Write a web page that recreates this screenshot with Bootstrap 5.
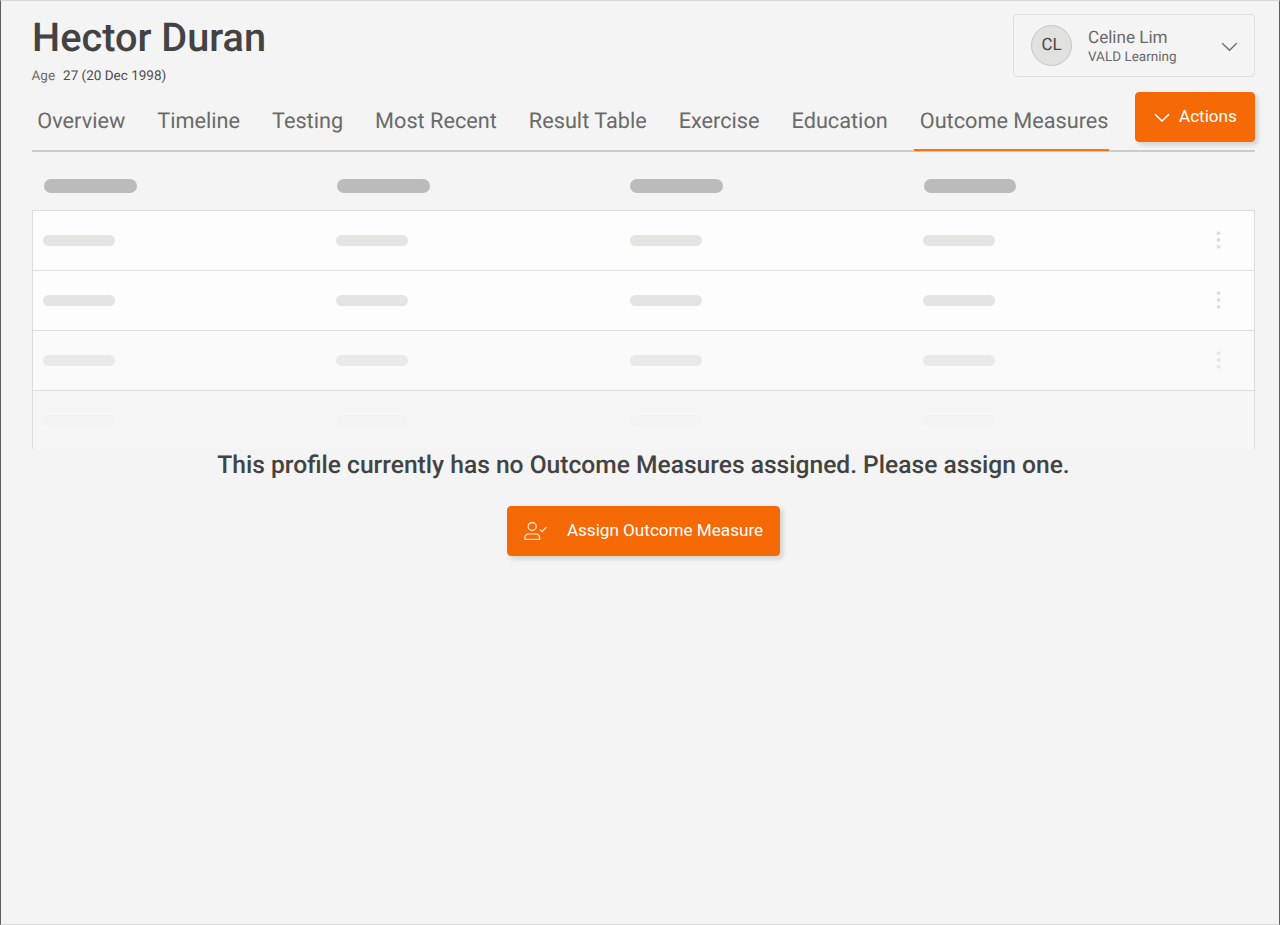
<!DOCTYPE html>
<html lang="en">
<head>
<meta charset="utf-8">
<meta name="viewport" content="width=device-width, initial-scale=1">
<title>Hector Duran</title>
<link href="https://cdn.jsdelivr.net/npm/bootstrap@5.3.0/dist/css/bootstrap.min.css" rel="stylesheet">
<style>
body{font-family:Roboto,"Liberation Sans",sans-serif;background:#f4f4f4;color:#434343;text-rendering:geometricPrecision}
.shell{height:925px;border:1px solid #5c5c5c;border-top-color:#dadada;border-bottom-color:#d6d6d6;padding:13px 24px 0 31px}
.person{font-size:39.7px;font-weight:500;line-height:48px;color:#434343}
.age{font-size:13.5px;line-height:18px;margin-top:5px;margin-left:-.5px;color:#6b6b6b;gap:8px}
.age b{font-weight:400;color:#4c4c4c}
.account{width:242px;height:63px;border:1px solid #dfdfdf;border-radius:4px;padding:0 16px 0 17px;color:#6a6a6a}
.account svg{margin-top:2px}
.avatar{width:41px;height:41px;border:1px solid #c6c6c6;background:#e1e1df;font-size:17px;color:#4a4a4a;flex:none;padding-top:1px}
.acc-name{font-size:17.1px;line-height:20px;margin-top:2px}
.acc-org{font-size:13.5px;line-height:18px}
.tabs-row{height:60px;margin-top:7px;border-bottom:2px solid #cbcbcb}
.tabs{gap:26px;height:59px;margin-left:-.7px}
.tabs .nav-link{padding:14px 0 0 6px;font-size:21.7px;line-height:32px;color:#6a6a6a;height:59px;white-space:nowrap}
.tabs .nav-link.active{border-bottom:2px solid #fa7414}
.btn-brand{--bs-btn-bg:#f56a07;--bs-btn-border-color:#f56a07;--bs-btn-color:#fff;--bs-btn-hover-bg:#e06005;--bs-btn-hover-color:#fff;border-radius:4px;height:50px;font-size:17.1px;box-shadow:3px 3px 5px rgba(0,0,0,.14);padding:0 16px;border-width:1px}
.btn-menu{width:120px;padding-left:17px}
.heads{height:58px;padding:0 0 0 12px}
.heads>div,.line>div{width:293.2px}
.pill-h{display:block;width:92.5px;height:14px;border-radius:7px;background:#bbb;margin-top:27px}
.pill-r{display:block;width:72px;height:11px;border-radius:6px;background:#e4e4e1}
.grid-box{border:1px solid #dcdcdc;border-bottom:0;height:239px}
.line{height:60px;padding:0 33px 0 10.3px;background:#fdfdfd;border-bottom:1px solid #dedede}
.line .dots{width:5px;flex:none;margin-bottom:1px}
.line:nth-child(3){background:#fafafa}
.line:nth-child(3) .pill-r{background:#e9e9e8}
.line:nth-child(3) .dots{opacity:.65}
.line:nth-child(4){background:#f6f6f6;border:0;height:58px}
.line:nth-child(4) .pill-r{background:#f3f3f3}
.line:nth-child(4) .dots{opacity:.05}
.empty-msg{font-size:24.6px;font-weight:500;line-height:32px;margin:1px 0 24px}
</style>
</head>
<body>
<div class="shell">
  <header class="d-flex justify-content-between align-items-start">
    <div>
      <h1 class="person m-0">Hector Duran</h1>
      <div class="age d-flex"><span>Age</span><b>27 (20 Dec 1998)</b></div>
    </div>
    <div class="account d-flex align-items-center">
      <div class="avatar rounded-circle d-flex align-items-center justify-content-center">CL</div>
      <div class="ms-3 me-auto"><div class="acc-name">Celine Lim</div><div class="acc-org">VALD Learning</div></div>
      <svg width="17" height="10" viewBox="0 0 17 10" fill="none" stroke="#6a6a6a" stroke-width="1.3"><path d="M1.2 1.2 8.5 8.3 15.8 1.2"/></svg>
    </div>
  </header>
  <div class="tabs-row d-flex justify-content-between">
    <nav class="tabs nav flex-nowrap">
      <a class="nav-link" href="#">Overview</a>
      <a class="nav-link" href="#">Timeline</a>
      <a class="nav-link" href="#">Testing</a>
      <a class="nav-link" href="#">Most Recent</a>
      <a class="nav-link" href="#">Result Table</a>
      <a class="nav-link" href="#">Exercise</a>
      <a class="nav-link" href="#">Education</a>
      <a class="nav-link active" href="#">Outcome Measures</a>
    </nav>
    <button class="btn btn-brand btn-menu d-flex align-items-center">
      <svg class="me-2" width="18" height="10" viewBox="0 0 18 10" fill="none" stroke="#fff" stroke-width="1.5"><path d="M2 2.2 9 9 16 2.2"/></svg>Actions
    </button>
  </div>
  <div class="heads d-flex"><div><i class="pill-h"></i></div><div><i class="pill-h"></i></div><div><i class="pill-h"></i></div><div><i class="pill-h"></i></div></div>
  <div class="grid-box" id="rows"></div>
  <div class="text-center">
    <p class="empty-msg">This profile currently has no Outcome Measures assigned. Please assign one.</p>
    <button class="btn btn-brand d-inline-flex align-items-center">
      <svg width="23" height="20" viewBox="0.5 0 23 20" fill="none" stroke="#ffd9b8" stroke-width="1.4"><circle cx="8.7" cy="5.5" r="4"/><path d="M1.3 18.4v-1.3c0-2.6 2-4.2 4.4-4.2h6c2.4 0 4.4 1.6 4.4 4.2v1.3Z" stroke-linejoin="round"/><path d="m16.3 8.5 2.2 2 4.3-4.2"/></svg>
      <span class="assign-label ms-3 ps-1">Assign Outcome Measure</span>
    </button>
  </div>
</div>
<script src="https://cdn.jsdelivr.net/npm/bootstrap@5.3.0/dist/js/bootstrap.bundle.min.js"></script>
<script>
const cell = '<div><i class="pill-r"></i></div>';
const dots = '<svg class="dots" width="5" height="18" viewBox="0 0 5 18" fill="#dededd"><circle cx="2.5" cy="2.2" r="1.9"/><circle cx="2.5" cy="9" r="1.9"/><circle cx="2.5" cy="15.8" r="1.9"/></svg>';
document.getElementById('rows').innerHTML =
  ('<div class="line d-flex align-items-center justify-content-between">' + cell.repeat(4) + dots + '</div>').repeat(4);
</script>
</body>
</html>
